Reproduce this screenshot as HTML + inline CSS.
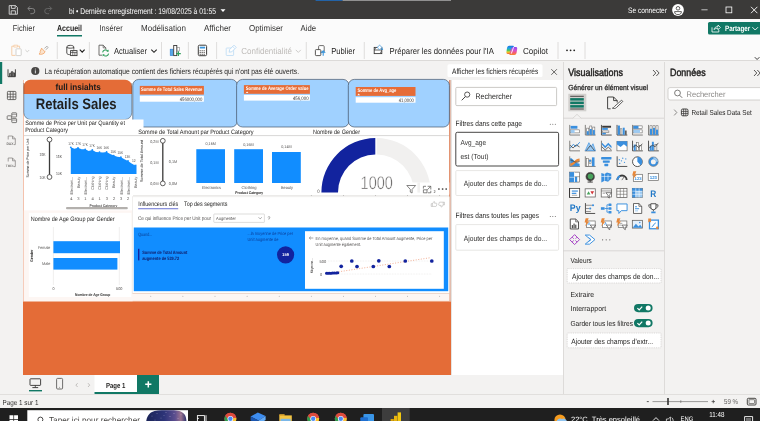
<!DOCTYPE html>
<html lang="fr"><head><meta charset="utf-8"><title>bi - Power BI Desktop</title>
<style>
html,body{margin:0;padding:0;background:#f3f2f1;}
body{width:760px;height:421px;overflow:hidden;position:relative;font-family:"Liberation Sans",sans-serif;}
.r{position:absolute;box-sizing:border-box;}
svg{position:absolute;left:0;top:0;will-change:transform;}
text{font-family:"Liberation Sans",sans-serif;white-space:pre;text-rendering:geometricPrecision;}
</style></head><body>
<div class="r " id="titlebar" style="left:0px;top:0px;width:760px;height:18.6px;background:#3b3a39;"></div>
<div class="r " id="ribbon" style="left:0px;top:18.6px;width:760px;height:42.9px;background:#fbfbfb;border-bottom:1px solid #dcdad8;"></div>
<div class="r " id="rail" style="left:0px;top:62px;width:23px;height:332px;background:#f3f2f1;"></div>
<div class="r " id="notif" style="left:23px;top:62px;width:540px;height:18px;background:#f3f2f1;"></div>
<div class="r " id="canvas" style="left:23px;top:80px;width:428px;height:295px;background:#E46C37;"></div>
<div class="r " id="filters" style="left:451px;top:79.6px;width:112px;height:295.4px;background:#ffffff;border-left:1px solid #e6e4e2;"></div>
<div class="r " id="viz" style="left:563px;top:62px;width:101px;height:332px;background:#f3f2f1;border-left:1px solid #dddbd9;"></div>
<div class="r " id="data" style="left:664px;top:62px;width:96px;height:332px;background:#f3f2f1;border-left:1px solid #dddbd9;"></div>
<div class="r " id="pagetabs" style="left:23px;top:375px;width:540px;height:19px;background:#f3f2f1;"></div>
<div class="r " id="status" style="left:0px;top:394px;width:760px;height:14px;background:#f3f2f1;border-top:1px solid #e1dfdd;"></div>
<div class="r " id="taskbar" style="left:0px;top:408px;width:760px;height:13px;background:#1f1f1f;"></div>
<svg width="760" height="421" viewBox="0 0 760 421">
<rect x="315.6" y="0" width="27.0" height="0.8" fill="#1f6fc4" rx="0" />
<rect x="342.6" y="0" width="108.4" height="0.8" fill="#a8a8a8" rx="0" />
<path d="M9.2 5.6h6.4l1.8 1.8v6.8h-8.2z M11.4 5.6v2.8h3.8v-2.8 M11.2 14.2v-3.4h4.2v3.4" fill="none" stroke="#d8d8d8" stroke-width="0.9" />
<path d="M28 8.5h4.2a2.6 2.6 0 0 1 0 5.2h-1.8 M30 6.3l-2.2 2.2l2.2 2.2" fill="none" stroke="#8a8a8a" stroke-width="0.9" />
<path d="M51.5 8.5h-4.2a2.6 2.6 0 0 0 0 5.2h1.8 M49.5 6.3l2.2 2.2l-2.2 2.2" fill="none" stroke="#6a6a6a" stroke-width="0.9" />
<text x="69" y="14.14" font-size="8.4" fill="#ffffff" font-weight="400" textLength="147" lengthAdjust="spacingAndGlyphs" >bi • Dernière enregistrement : 19/08/2025 à 01:55</text>
<path d="M220.5 9.3h5l-2.5 2.8z" fill="#ffffff" />
<text x="628" y="13.03" font-size="7.8" fill="#ffffff" font-weight="400" textLength="39" lengthAdjust="spacingAndGlyphs" >Se connecter</text>
<circle cx="678" cy="10" r="5.9" fill="#ffffff" />
<circle cx="678" cy="8.3" r="1.8" fill="#ffffff" stroke="#3b3a39" stroke-width="0.8" />
<path d="M674.6 11.6h6.8c0 2.2-1.4 3-3.4 3s-3.4-0.8-3.4-3z" fill="#ffffff" stroke="#3b3a39" stroke-width="0.8" />
<line x1="701.4" y1="9.8" x2="707.6" y2="9.8" stroke="#d0d0d0" stroke-width="0.9" />
<rect x="726" y="7" width="5.8" height="5.8" fill="none" stroke="#ffffff" stroke-width="0.8" rx="0" />
<path d="M751 6.8l6.4 6.4M757.4 6.8l-6.4 6.4" fill="none" stroke="#ffffff" stroke-width="0.9" />
<text x="12.7" y="30.91" font-size="8.6" fill="#323130" font-weight="400" textLength="22.3" lengthAdjust="spacingAndGlyphs" >Fichier</text>
<text x="99.5" y="30.91" font-size="8.6" fill="#323130" font-weight="400" textLength="23.2" lengthAdjust="spacingAndGlyphs" >Insérer</text>
<text x="141" y="30.91" font-size="8.6" fill="#323130" font-weight="400" textLength="45" lengthAdjust="spacingAndGlyphs" >Modélisation</text>
<text x="204" y="30.91" font-size="8.6" fill="#323130" font-weight="400" textLength="27" lengthAdjust="spacingAndGlyphs" >Afficher</text>
<text x="249" y="30.91" font-size="8.6" fill="#323130" font-weight="400" textLength="34" lengthAdjust="spacingAndGlyphs" >Optimiser</text>
<text x="300.5" y="30.91" font-size="8.6" fill="#323130" font-weight="400" textLength="15.5" lengthAdjust="spacingAndGlyphs" >Aide</text>
<text x="57" y="30.91" font-size="8.6" fill="#201f1e" font-weight="700" textLength="25" lengthAdjust="spacingAndGlyphs" >Accueil</text>
<rect x="57" y="35" width="25" height="1.5" fill="#117865" rx="0" />
<rect x="708" y="22" width="57" height="12.6" fill="#117865" rx="1.5" />
<path d="M712 27.3v4.7h6.8v-2 M714 29.6c0.4-2 1.8-3 4-3v-1.6l2.4 2.4l-2.4 2.4v-1.6c-1.6 0-3 0.4-4 1.4z" fill="none" stroke="#ffffff" stroke-width="0.8" />
<text x="725" y="31.23" font-size="7.8" fill="#ffffff" font-weight="700" textLength="25.2" lengthAdjust="spacingAndGlyphs" >Partager</text>
<path d="M752.4 27.2l2.8 2.8l2.8-2.8" fill="none" stroke="#ffffff" stroke-width="0.9" />
<line x1="57.3" y1="42" x2="57.3" y2="59" stroke="#d8d6d4" stroke-width="0.8" />
<line x1="89.4" y1="42" x2="89.4" y2="59" stroke="#d8d6d4" stroke-width="0.8" />
<line x1="161.5" y1="42" x2="161.5" y2="59" stroke="#d8d6d4" stroke-width="0.8" />
<line x1="188.4" y1="42" x2="188.4" y2="59" stroke="#d8d6d4" stroke-width="0.8" />
<line x1="216.6" y1="42" x2="216.6" y2="59" stroke="#d8d6d4" stroke-width="0.8" />
<line x1="306.3" y1="42" x2="306.3" y2="59" stroke="#d8d6d4" stroke-width="0.8" />
<line x1="364.3" y1="42" x2="364.3" y2="59" stroke="#d8d6d4" stroke-width="0.8" />
<line x1="558" y1="42" x2="558" y2="59" stroke="#d8d6d4" stroke-width="0.8" />
<line x1="585" y1="42" x2="585" y2="59" stroke="#d8d6d4" stroke-width="0.8" />
<path d="M15.6 55.4h-3.8v-9.2h7.8v2.2" fill="none" stroke="#f5c9a0" stroke-width="0.9" />
<path d="M13.8 45.2h3.8v1.8h-3.8z" fill="#ffffff" stroke="#f5c9a0" stroke-width="0.8" />
<rect x="16" y="48.8" width="5.2" height="6.8" fill="#ffffff" stroke="#c8c6c4" stroke-width="0.8" rx="0.6" />
<path d="M25.4 50l1.9 1.9l1.9-1.9" fill="none" stroke="#c8c6c4" stroke-width="0.8" />
<path d="M44.4 48.4l2.6-2.2l1.2 1.4l-2.6 2.2" fill="none" stroke="#a19f9d" stroke-width="0.8" />
<path d="M41.6 48.2l3.6 3.8l-1.2 1.2c-1.6 1.2-3.2 1.4-5 0.8c1-0.8 1.4-1.6 1.2-2.6z" fill="#fbe3cc" stroke="#f0a060" stroke-width="0.8" />
<path d="M66.8 47c0-2.2 7-2.2 7 0v2.6 M66.8 47v6c0 1 1.4 1.6 3 1.7 M66.8 47c0 1.6 7 1.6 7 0" fill="none" stroke="#3b3a39" stroke-width="0.9" />
<rect x="70.6" y="50.6" width="6.4" height="5.0" fill="#ffffff" stroke="#3b3a39" stroke-width="0.9" rx="0" />
<line x1="70.6" y1="52.4" x2="77" y2="52.4" stroke="#3b3a39" stroke-width="0.7" />
<line x1="72.8" y1="50.6" x2="72.8" y2="55.6" stroke="#3b3a39" stroke-width="0.7" />
<line x1="74.9" y1="52.4" x2="74.9" y2="55.6" stroke="#3b3a39" stroke-width="0.7" />
<path d="M79.8 49.6l2.4 2.5l2.4-2.5" fill="none" stroke="#252423" stroke-width="1.2" />
<path d="M102 55.2h-3v-10h4.2l2.6 2.6v1.6" fill="none" stroke="#605e5c" stroke-width="0.9" />
<path d="M103.2 45.2v2.6h2.6" fill="none" stroke="#605e5c" stroke-width="0.8" />
<path d="M102.6 52.4a3 3 0 0 1 5.2-1.4 M108.6 53.6a3 3 0 0 1-5.2 1.4" fill="none" stroke="#2e9e5b" stroke-width="1.1" />
<path d="M108.6 49.6v2.2h-2.2z M102.6 56.4v-2.2h2.2z" fill="#2e9e5b" />
<text x="114" y="53.65" font-size="8.7" fill="#252423" font-weight="400" textLength="33" lengthAdjust="spacingAndGlyphs" >Actualiser</text>
<path d="M151.3 49.6l2.7 2.7l2.7-2.7" fill="none" stroke="#252423" stroke-width="1.1" />
<rect x="170.2" y="49.2" width="3.0" height="6.4" fill="#5aa9e8" stroke="#2b7cd3" stroke-width="0.6" rx="0" />
<rect x="173.7" y="45.5" width="3.1" height="10.1" fill="#ffffff" stroke="#3b3a39" stroke-width="0.9" rx="0" />
<rect x="177.2" y="47.4" width="2.4" height="3.6" fill="#ffffff" stroke="#8a8886" stroke-width="0.6" rx="0" />
<path d="M178.4 51.2v4.8M176 53.6h4.8" fill="none" stroke="#2e9e5b" stroke-width="1.1" />
<rect x="198.3" y="45.2" width="8.3" height="10.5" fill="#ffffff" stroke="#3b3a39" stroke-width="1" rx="1.2" />
<rect x="199.8" y="46.7" width="5.3" height="1.8" fill="#3a96dd" rx="0" />
<rect x="199.6" y="50.2" width="1.2" height="1.1" fill="#605e5c" rx="0" />
<rect x="201.6" y="50.2" width="1.2" height="1.1" fill="#605e5c" rx="0" />
<rect x="203.6" y="50.2" width="1.2" height="1.1" fill="#605e5c" rx="0" />
<rect x="199.6" y="52" width="1.2" height="1.1" fill="#605e5c" rx="0" />
<rect x="201.6" y="52" width="1.2" height="1.1" fill="#605e5c" rx="0" />
<rect x="203.6" y="52" width="1.2" height="1.1" fill="#605e5c" rx="0" />
<rect x="199.6" y="53.8" width="1.2" height="1.1" fill="#605e5c" rx="0" />
<rect x="201.6" y="53.8" width="1.2" height="1.1" fill="#605e5c" rx="0" />
<rect x="203.6" y="53.8" width="1.2" height="1.1" fill="#605e5c" rx="0" />
<rect x="226.2" y="48" width="7.4" height="7.5" fill="none" stroke="#c3dff5" stroke-width="0.9" rx="0.6" />
<path d="M229.6 49.6l4.4-4.4l2.2 2.2l-4.4 4.4l-2.6 0.4z" fill="#ffffff" stroke="#b3d6f2" stroke-width="0.8" />
<path d="M232.6 46.4l2.2 2.2" fill="none" stroke="#b3d6f2" stroke-width="0.7" />
<text x="241.3" y="53.65" font-size="8.7" fill="#bebbb8" font-weight="400" textLength="50.7" lengthAdjust="spacingAndGlyphs" >Confidentialité</text>
<path d="M295.8 49.9l2.5 2.5l2.5-2.5" fill="none" stroke="#c8c6c4" stroke-width="0.9" />
<rect x="318.6" y="45.6" width="5.6" height="6.6" fill="#ffffff" stroke="#605e5c" stroke-width="0.9" rx="1" />
<rect x="315.4" y="49.6" width="5.4" height="6.0" fill="#ffffff" stroke="#484644" stroke-width="0.9" rx="0.8" />
<path d="M323.2 55.8v-4.6M321.2 52.8l2-2l2 2" fill="none" stroke="#3a96dd" stroke-width="1.1" />
<text x="331.2" y="53.65" font-size="8.7" fill="#252423" font-weight="400" textLength="23.8" lengthAdjust="spacingAndGlyphs" >Publier</text>
<rect x="374.2" y="47.4" width="7.6" height="6.2" fill="#ffffff" stroke="#3b3a39" stroke-width="0.9" rx="0" />
<line x1="374.2" y1="50" x2="381.8" y2="50" stroke="#3b3a39" stroke-width="0.8" />
<path d="M374.2 47.4l1.4 1.3l-1.4 1.3M381.8 53.6l-1.4-1.3l1.4-1.3" fill="none" stroke="#3b3a39" stroke-width="0.7" />
<path d="M379.6 44.8l1 1.6l1.6 1l-1.6 1l-1 1.6l-1-1.6l-1.6-1l1.6-1z" fill="#ffffff" stroke="#3a96dd" stroke-width="0.6" />
<circle cx="382.2" cy="49.2" r="0.9" fill="#3a96dd" />
<text x="389.5" y="53.65" font-size="8.7" fill="#252423" font-weight="400" textLength="104.3" lengthAdjust="spacingAndGlyphs" >Préparer les données pour l'IA</text>
<defs><linearGradient id="cg1" x1="0" y1="0" x2="0" y2="1"><stop offset="0" stop-color="#1a6fe0"/><stop offset="0.3" stop-color="#1fa3e8"/><stop offset="0.55" stop-color="#3cc46a"/><stop offset="0.78" stop-color="#f3d125"/><stop offset="1" stop-color="#f0602a"/></linearGradient><linearGradient id="cg2" x1="0" y1="0" x2="0" y2="1"><stop offset="0" stop-color="#8a4bf0"/><stop offset="0.4" stop-color="#d34fd6"/><stop offset="0.7" stop-color="#f25a78"/><stop offset="1" stop-color="#f78a2a"/></linearGradient></defs>
<path d="M509.3 45.8h3.4c1 0 1.4 0.6 1.1 1.5l-1.7 5.2c-0.3 0.9-1 1.4-2 1.4h-2.3c-1 0-1.5-0.7-1.4-1.6l0.5-3.6c0.2-1.8 1-2.9 2.4-2.9z" fill="url(#cg1)" />
<path d="M513.9 47.1h1.9c1 0 1.5 0.7 1.4 1.6l-0.5 3.4c-0.2 1.8-1 2.9-2.4 2.9h-3.8c-1 0-1.4-0.6-1.1-1.5l1.9-5.2c0.4-0.8 1-1.2 2.6-1.2z" fill="url(#cg2)" />
<path d="M513.6 47.2l-2.3 6.4" fill="none" stroke="#ffffff" stroke-width="0.9" />
<text x="523" y="53.65" font-size="8.7" fill="#252423" font-weight="400" textLength="25" lengthAdjust="spacingAndGlyphs" >Copilot</text>
<circle cx="567" cy="50.3" r="0.9" fill="#252423" />
<circle cx="570.6" cy="50.3" r="0.9" fill="#252423" />
<circle cx="574.2" cy="50.3" r="0.9" fill="#252423" />
<path d="M754.8 57.2l2.3 2.3l2.3-2.3" fill="none" stroke="#252423" stroke-width="0.9" />
<circle cx="35.3" cy="71" r="4.1" fill="#484644" />
<rect x="34.9" y="70.3" width="0.8" height="3.1" fill="#ffffff" rx="0" />
<rect x="34.9" y="68.6" width="0.8" height="0.9" fill="#ffffff" rx="0" />
<text x="44.5" y="73.86" font-size="7.9" fill="#252423" font-weight="400" textLength="254.5" lengthAdjust="spacingAndGlyphs" >La récupération automatique contient des fichiers récupérés qui n'ont pas été ouverts.</text>
<rect x="447.5" y="64.3" width="95.0" height="12.7" fill="#ffffff" rx="1.5" />
<text x="452" y="73.86" font-size="7.9" fill="#252423" font-weight="400" textLength="86.3" lengthAdjust="spacingAndGlyphs" >Afficher les fichiers récupérés</text>
<path d="M551.3 69.2l5.6 5.6M556.9 69.2l-5.6 5.6" fill="none" stroke="#484644" stroke-width="0.8" />
<rect x="0" y="62" width="2.2" height="22" fill="#117865" rx="0" />
<path d="M8 69.3v7.4h7.4v-7.4 M9.6 76.7v-3.4h1.3v3.4 M11.4 76.7v-5h1.3v5 M13.2 76.7v-3.8h1.3v3.8" fill="none" stroke="#323130" stroke-width="0.9" />
<rect x="7.4" y="91.4" width="8.5" height="8.2" fill="none" stroke="#484644" stroke-width="0.8" rx="0.8" />
<line x1="7.4" y1="94.2" x2="15.9" y2="94.2" stroke="#484644" stroke-width="0.7" />
<line x1="7.4" y1="96.9" x2="15.9" y2="96.9" stroke="#484644" stroke-width="0.7" />
<line x1="10.3" y1="91.4" x2="10.3" y2="99.6" stroke="#484644" stroke-width="0.7" />
<line x1="13.1" y1="91.4" x2="13.1" y2="99.6" stroke="#484644" stroke-width="0.7" />
<rect x="11.8" y="112.8" width="4.8" height="4.2" fill="none" stroke="#605e5c" stroke-width="0.8" rx="0.6" />
<rect x="7.2" y="115.8" width="4.2" height="3.6" fill="none" stroke="#605e5c" stroke-width="0.8" rx="0.6" />
<rect x="11.8" y="118.6" width="4.8" height="4.0" fill="none" stroke="#605e5c" stroke-width="0.8" rx="0.6" />
<line x1="11.8" y1="114.3" x2="16.6" y2="114.3" stroke="#605e5c" stroke-width="0.6" />
<line x1="11.8" y1="120.1" x2="16.6" y2="120.1" stroke="#605e5c" stroke-width="0.6" />
<path d="M8.2 139.5v-3.5h4.3l2.8 2.8v5.8h-1.5 M12.5 136v2.8h2.8" fill="none" stroke="#8a8886" stroke-width="0.8" />
<text x="6.4" y="144.66" font-size="3.6" fill="#797775" font-weight="700" textLength="7.2" lengthAdjust="spacingAndGlyphs" >DAX</text>
<path d="M8.2 161.5v-3.5h4.3l2.8 2.8v5.8h-1.5 M12.5 158v2.8h2.8" fill="none" stroke="#8a8886" stroke-width="0.8" />
<text x="5.8" y="166.59" font-size="3.4" fill="#797775" font-weight="700" textLength="8.6" lengthAdjust="spacingAndGlyphs" >TMDL</text>
<rect x="24" y="80" width="425" height="213" fill="#ffffff" rx="0" />
<rect x="449.5" y="80" width="1.5" height="221" fill="#e2bcad" rx="0" />
<rect x="23" y="80" width="0.8" height="221" fill="#f8d9cb" rx="0" />
<rect x="24" y="293.4" width="425.5" height="7.8" fill="#fdf6f3" rx="0" />
<rect x="23" y="300.9" width="428" height="1.1" fill="#eda27f" rx="0" />
<circle cx="54.5" cy="296.3" r="0.45" fill="#8a8886" />
<circle cx="86.59999999999997" cy="296.3" r="0.45" fill="#8a8886" />
<circle cx="118.69999999999999" cy="296.3" r="0.45" fill="#8a8886" />
<circle cx="150.79999999999998" cy="296.3" r="0.45" fill="#8a8886" />
<circle cx="182.89999999999998" cy="296.3" r="0.45" fill="#8a8886" />
<circle cx="215.0" cy="296.3" r="0.45" fill="#8a8886" />
<circle cx="247.1" cy="296.3" r="0.45" fill="#8a8886" />
<circle cx="279.2" cy="296.3" r="0.45" fill="#8a8886" />
<circle cx="311.3" cy="296.3" r="0.45" fill="#8a8886" />
<circle cx="343.4" cy="296.3" r="0.45" fill="#8a8886" />
<circle cx="375.5" cy="296.3" r="0.45" fill="#8a8886" />
<circle cx="407.6" cy="296.3" r="0.45" fill="#8a8886" />
<circle cx="439.7" cy="296.3" r="0.45" fill="#8a8886" />
<path d="M23.6 94v-7.2a7 7 0 0 1 7-7h94.4a7 7 0 0 1 7 7v7.2z" fill="#E46C37" />
<path d="M23.6 94v18.6a7 7 0 0 0 7 7h94.4a7 7 0 0 0 7-7v-18.6z" fill="#A0D1FF" />
<path d="M23.8 83v29.6a7 7 0 0 0 7 7h94a7 7 0 0 0 7-7v-29.6" fill="none" stroke="#4a4a4a" stroke-width="0.5" />
<text x="55.6" y="89.7" font-size="8.9" fill="#1a1a1a" font-weight="700" textLength="45.2" lengthAdjust="spacingAndGlyphs" >full insiahts</text>
<text x="35.7" y="109.1" font-size="15.2" fill="#201f1e" font-weight="700" textLength="80.9" lengthAdjust="spacingAndGlyphs" >Retails Sales</text>
<rect x="132.8" y="79.4" width="104.5" height="47.6" fill="#A0D1FF" stroke="#46566a" stroke-width="0.7" rx="6" />
<rect x="236.6" y="79.4" width="112.4" height="47.6" fill="#A0D1FF" stroke="#46566a" stroke-width="0.7" rx="6" />
<rect x="348.3" y="79.4" width="101.1" height="47.6" fill="#A0D1FF" stroke="#46566a" stroke-width="0.7" rx="6" />
<rect x="139.8" y="85.9" width="64.1" height="8.7" fill="#E66C37" rx="0" />
<rect x="139.8" y="95.8" width="64.1" height="5.9" fill="#ffffff" rx="0" />
<text x="141" y="91.28" font-size="5.1" fill="#ffffff" font-weight="700" textLength="61.3" lengthAdjust="spacingAndGlyphs" >Somme de Total Sales Revenue</text>
<text x="179.7" y="100.58" font-size="5.1" fill="#3b3a39" font-weight="400" textLength="22.6" lengthAdjust="spacingAndGlyphs" >456000,000</text>
<rect x="243.9" y="85.1" width="66.0" height="8.7" fill="#E66C37" rx="0" />
<rect x="243.9" y="94.9" width="66.0" height="5.7" fill="#ffffff" rx="0" />
<text x="245.8" y="90.19" font-size="5.1" fill="#ffffff" font-weight="700" textLength="62.8" lengthAdjust="spacingAndGlyphs" >Somme de Average Order value</text>
<path d="M245.8 93.1l1.3-1.7l1.3 1.7z" fill="#ffffff" />
<text x="292.9" y="99.69" font-size="5.1" fill="#3b3a39" font-weight="400" textLength="15.7" lengthAdjust="spacingAndGlyphs" >456,000</text>
<rect x="355.7" y="87" width="59.8" height="8.9" fill="#E66C37" rx="0" />
<rect x="355.7" y="97.2" width="59.8" height="5.5" fill="#ffffff" rx="0" />
<text x="357.4" y="92.38" font-size="5.1" fill="#ffffff" font-weight="700" textLength="39.0" lengthAdjust="spacingAndGlyphs" >Somme de Avg_age</text>
<path d="M357.4 95.2l1.3-1.7l1.3 1.7z" fill="#ffffff" />
<text x="398.8" y="101.88" font-size="5.1" fill="#3b3a39" font-weight="400" textLength="15.0" lengthAdjust="spacingAndGlyphs" >41,0000</text>
<rect x="24" y="119.5" width="119.5" height="16.5" fill="#ffffff" rx="0" />
<text x="25.3" y="125.34" font-size="6.3" fill="#252423" font-weight="400" textLength="99.7" lengthAdjust="spacingAndGlyphs" >Somme de Price per Unit par Quantity et</text>
<text x="25.3" y="131.74" font-size="6.3" fill="#252423" font-weight="400" textLength="42.7" lengthAdjust="spacingAndGlyphs" >Product Category</text>
<line x1="24" y1="135.6" x2="449" y2="135.6" stroke="#c8c6c4" stroke-width="0.7" />
<line x1="133" y1="195.6" x2="449" y2="195.6" stroke="#e1dfdd" stroke-width="0.7" />
<text x="0" y="0" font-size="3.9" fill="#252423" font-weight="400" textLength="39" lengthAdjust="spacingAndGlyphs" transform="translate(28.6 177.5) rotate(-90)">Somme de Price per Unit</text>
<line x1="49.5" y1="139.6" x2="49.5" y2="177" stroke="#3b3a39" stroke-width="1.3" />
<circle cx="49.5" cy="139.6" r="2.4" fill="#ffffff" stroke="#3b3a39" stroke-width="0.8" />
<circle cx="49.5" cy="177" r="2.4" fill="#ffffff" stroke="#3b3a39" stroke-width="0.8" />
<text x="39.6" y="155.5" font-size="4.29" fill="#535150" font-weight="400" textLength="6.0" lengthAdjust="spacingAndGlyphs" >15K</text>
<text x="39.6" y="179.0" font-size="4.29" fill="#535150" font-weight="400" textLength="6.0" lengthAdjust="spacingAndGlyphs" >10K</text>
<text x="56" y="157.7" font-size="4.29" fill="#535150" font-weight="400" textLength="6" lengthAdjust="spacingAndGlyphs" >15K</text>
<text x="56" y="174.8" font-size="4.29" fill="#535150" font-weight="400" textLength="6" lengthAdjust="spacingAndGlyphs" >10K</text>
<path d="M70.8 147.3 L74.4 148.8 L78 147.8 L81.6 149.2 L85.2 149.3 L88.7 151 L92.3 150 L95.9 152 L99.5 152.2 L103 152.6 L106.6 152 L110.2 154 L113.7 155.6 L117.3 156.8 L120.9 157.2 L124.4 159.2 L128 161 L131.6 163.6 L135.1 165.4 L136.5 164.6 L136.5 173.9 L70.8 173.9 Z" fill="#118DFF" />
<circle cx="70.8" cy="147.3" r="0.9" fill="#118DFF" />
<circle cx="78" cy="147.8" r="0.9" fill="#118DFF" />
<circle cx="85.2" cy="149.3" r="0.9" fill="#118DFF" />
<circle cx="92.3" cy="150" r="0.9" fill="#118DFF" />
<circle cx="99.5" cy="152.2" r="0.9" fill="#118DFF" />
<circle cx="106.6" cy="152" r="0.9" fill="#118DFF" />
<circle cx="113.7" cy="155.6" r="0.9" fill="#118DFF" />
<circle cx="120.9" cy="157.2" r="0.9" fill="#118DFF" />
<circle cx="128" cy="161" r="0.9" fill="#118DFF" />
<circle cx="135.1" cy="165.4" r="0.9" fill="#118DFF" />
<text x="68.3" y="144.88" font-size="3.95" fill="#535150" font-weight="400" textLength="5.6" lengthAdjust="spacingAndGlyphs" >17K</text>
<text x="75.4" y="144.98" font-size="3.95" fill="#535150" font-weight="400" textLength="5.6" lengthAdjust="spacingAndGlyphs" >17K</text>
<text x="82.3" y="145.98" font-size="3.95" fill="#535150" font-weight="400" textLength="5.6" lengthAdjust="spacingAndGlyphs" >17K</text>
<text x="89.3" y="146.88" font-size="3.95" fill="#535150" font-weight="400" textLength="5.6" lengthAdjust="spacingAndGlyphs" >17K</text>
<text x="96.4" y="148.58" font-size="3.95" fill="#535150" font-weight="400" textLength="5.6" lengthAdjust="spacingAndGlyphs" >16K</text>
<text x="103.5" y="148.68" font-size="3.95" fill="#535150" font-weight="400" textLength="5.6" lengthAdjust="spacingAndGlyphs" >16K</text>
<text x="110.6" y="152.78" font-size="3.95" fill="#535150" font-weight="400" textLength="5.6" lengthAdjust="spacingAndGlyphs" >15K</text>
<text x="117.6" y="153.78" font-size="3.95" fill="#535150" font-weight="400" textLength="5.6" lengthAdjust="spacingAndGlyphs" >15K</text>
<text x="124.8" y="158.38" font-size="3.95" fill="#535150" font-weight="400" textLength="5.6" lengthAdjust="spacingAndGlyphs" >13K</text>
<text x="132" y="162.18" font-size="3.95" fill="#535150" font-weight="400" textLength="3.7" lengthAdjust="spacingAndGlyphs" >12</text>
<text x="-18" y="0" font-size="4" fill="#535150" font-weight="400" textLength="18" lengthAdjust="spacingAndGlyphs" transform="translate(72.60000000000001 176.6) rotate(-90)">Electroni...</text>
<text x="-11.2" y="0" font-size="4" fill="#535150" font-weight="400" textLength="11.2" lengthAdjust="spacingAndGlyphs" transform="translate(79.7 176.6) rotate(-90)">Beauty</text>
<text x="-18" y="0" font-size="4" fill="#535150" font-weight="400" textLength="18" lengthAdjust="spacingAndGlyphs" transform="translate(86.7 176.6) rotate(-90)">Electroni...</text>
<text x="-13.2" y="0" font-size="4" fill="#535150" font-weight="400" textLength="13.2" lengthAdjust="spacingAndGlyphs" transform="translate(93.9 176.6) rotate(-90)">Clothing</text>
<text x="-13.2" y="0" font-size="4" fill="#535150" font-weight="400" textLength="13.2" lengthAdjust="spacingAndGlyphs" transform="translate(101.0 176.6) rotate(-90)">Clothing</text>
<text x="-13.2" y="0" font-size="4" fill="#535150" font-weight="400" textLength="13.2" lengthAdjust="spacingAndGlyphs" transform="translate(108.2 176.6) rotate(-90)">Clothing</text>
<text x="-11.2" y="0" font-size="4" fill="#535150" font-weight="400" textLength="11.2" lengthAdjust="spacingAndGlyphs" transform="translate(115.30000000000001 176.6) rotate(-90)">Beauty</text>
<text x="-18" y="0" font-size="4" fill="#535150" font-weight="400" textLength="18" lengthAdjust="spacingAndGlyphs" transform="translate(122.5 176.6) rotate(-90)">Electroni...</text>
<text x="-18" y="0" font-size="4" fill="#535150" font-weight="400" textLength="18" lengthAdjust="spacingAndGlyphs" transform="translate(129.5 176.6) rotate(-90)">Electroni...</text>
<text x="-11.2" y="0" font-size="4" fill="#535150" font-weight="400" textLength="11.2" lengthAdjust="spacingAndGlyphs" transform="translate(136.5 176.6) rotate(-90)">Beauty</text>
<text x="70.2" y="199.62" font-size="4.07" fill="#535150" font-weight="400" >4</text>
<text x="77.3" y="199.62" font-size="4.07" fill="#535150" font-weight="400" >3</text>
<text x="84.3" y="199.62" font-size="4.07" fill="#535150" font-weight="400" >1</text>
<text x="91.5" y="199.62" font-size="4.07" fill="#535150" font-weight="400" >4</text>
<text x="98.6" y="199.62" font-size="4.07" fill="#535150" font-weight="400" >1</text>
<text x="105.8" y="199.62" font-size="4.07" fill="#535150" font-weight="400" >3</text>
<text x="112.9" y="199.62" font-size="4.07" fill="#535150" font-weight="400" >2</text>
<text x="120.1" y="199.62" font-size="4.07" fill="#535150" font-weight="400" >3</text>
<text x="127.1" y="199.62" font-size="4.07" fill="#535150" font-weight="400" >2</text>
<text x="89.5" y="206.58" font-size="3.95" fill="#535150" font-weight="700" textLength="27.8" lengthAdjust="spacingAndGlyphs" >Product Category</text>
<rect x="66" y="207" width="61.8" height="2.2" fill="#b3b0ad" rx="1" />
<text x="138.3" y="133.84" font-size="6.3" fill="#252423" font-weight="400" textLength="115.3" lengthAdjust="spacingAndGlyphs" >Somme de Total Amount par Product Category</text>
<text x="0" y="0" font-size="3.9" fill="#252423" font-weight="400" textLength="42" lengthAdjust="spacingAndGlyphs" transform="translate(142.6 182) rotate(-90)">Somme de Total Amount</text>
<line x1="162.8" y1="140.8" x2="162.8" y2="183.4" stroke="#3b3a39" stroke-width="1.3" />
<circle cx="162.8" cy="140.8" r="2.4" fill="#ffffff" stroke="#3b3a39" stroke-width="0.8" />
<circle cx="162.8" cy="183.4" r="2.4" fill="#ffffff" stroke="#3b3a39" stroke-width="0.8" />
<text x="150.3" y="142.76" font-size="4.18" fill="#535150" font-weight="400" textLength="8.2" lengthAdjust="spacingAndGlyphs" >0,2M</text>
<text x="150.3" y="163.66" font-size="4.18" fill="#535150" font-weight="400" textLength="8.2" lengthAdjust="spacingAndGlyphs" >0,1M</text>
<text x="150.3" y="184.96" font-size="4.18" fill="#535150" font-weight="400" textLength="8.2" lengthAdjust="spacingAndGlyphs" >0,0M</text>
<text x="168.8" y="162.86" font-size="4.18" fill="#535150" font-weight="400" textLength="8.4" lengthAdjust="spacingAndGlyphs" >0,1M</text>
<text x="168.8" y="184.96" font-size="4.18" fill="#535150" font-weight="400" textLength="8.4" lengthAdjust="spacingAndGlyphs" >0,0M</text>
<rect x="196.3" y="149.2" width="28.7" height="33.8" fill="#118DFF" rx="0" />
<rect x="234.2" y="149.2" width="28.8" height="33.8" fill="#118DFF" rx="0" />
<rect x="272" y="152" width="28.8" height="31" fill="#118DFF" rx="0" />
<text x="205.5" y="145.42" font-size="4.07" fill="#535150" font-weight="400" textLength="10.3" lengthAdjust="spacingAndGlyphs" >0,16M</text>
<text x="243.2" y="146.02" font-size="4.07" fill="#535150" font-weight="400" textLength="10.6" lengthAdjust="spacingAndGlyphs" >0,16M</text>
<text x="281.2" y="148.02" font-size="4.07" fill="#535150" font-weight="400" textLength="10.4" lengthAdjust="spacingAndGlyphs" >0,14M</text>
<text x="202" y="188.82" font-size="4.07" fill="#535150" font-weight="400" textLength="19" lengthAdjust="spacingAndGlyphs" >Electronics</text>
<text x="241.5" y="188.82" font-size="4.07" fill="#535150" font-weight="400" textLength="15.0" lengthAdjust="spacingAndGlyphs" >Clothing</text>
<text x="281" y="188.82" font-size="4.07" fill="#535150" font-weight="400" textLength="12" lengthAdjust="spacingAndGlyphs" >Beauty</text>
<text x="235.2" y="193.94" font-size="3.84" fill="#252423" font-weight="700" textLength="28.0" lengthAdjust="spacingAndGlyphs" >Product Category</text>
<text x="313" y="133.84" font-size="6.3" fill="#252423" font-weight="400" textLength="47" lengthAdjust="spacingAndGlyphs" >Nombre de Gender</text>
<path d="M321.4 192.5a54.6 54.6 0 0 1 53.9-54.6v16.6a38 38 0 0 0-37.3 38z" fill="#12239E" />
<path d="M376.7 137.9a54.6 54.6 0 0 1 53.9 54.6h-16.6a38 38 0 0 0-37.3-38z" fill="#f1f0ef" />
<text x="360.6" y="189.1" font-size="18.3" fill="#535150" font-weight="400" textLength="32.3" lengthAdjust="spacingAndGlyphs" stroke="#ffffff" stroke-width="0.55">1000</text>
<text x="317.3" y="192.54" font-size="4.97" fill="#535150" font-weight="400" textLength="2.4" lengthAdjust="spacingAndGlyphs" >0</text>
<rect x="404.5" y="182.5" width="44.8" height="12.1" fill="#ffffff" rx="0" />
<rect x="417.4" y="182.5" width="2.6" height="10.1" fill="#f1f0ef" rx="0" />
<path d="M406.8 185.5h8.8l-3.5 3.9v3.6l-1.8-0.9v-2.7z" fill="none" stroke="#535150" stroke-width="0.7" />
<path d="M423.4 188.6v-2.3h2.6 M427.6 186.3h3.2v3.2 M430.8 186.3l-3.6 3.6 M430.8 190.8v2h-3 M423.4 189.8h3.6v3h-3.6z" fill="none" stroke="#535150" stroke-width="0.7" />
<text x="433.5" y="192.63" font-size="3.8" fill="#535150" font-weight="400" >2</text>
<rect x="438.15" y="188.3" width="1.5" height="1.5" fill="#484644" rx="0" />
<rect x="441.85" y="188.3" width="1.5" height="1.5" fill="#484644" rx="0" />
<rect x="445.45" y="188.3" width="1.5" height="1.5" fill="#484644" rx="0" />
<circle cx="311.3" cy="195.4" r="0.45" fill="#8a8886" />
<circle cx="343.4" cy="195.4" r="0.45" fill="#8a8886" />
<circle cx="375.5" cy="195.4" r="0.45" fill="#8a8886" />
<circle cx="407.6" cy="195.4" r="0.45" fill="#8a8886" />
<circle cx="439.7" cy="195.4" r="0.45" fill="#8a8886" />
<rect x="23.8" y="210.4" width="108.8" height="90.8" fill="#fdf6f3" rx="0" />
<rect x="28.8" y="212.8" width="102.5" height="84.2" fill="#ffffff" rx="0" />
<text x="30.8" y="220.74" font-size="6.3" fill="#252423" font-weight="400" textLength="83.8" lengthAdjust="spacingAndGlyphs" >Nombre de Age Group par Gender</text>
<line x1="53.4" y1="227" x2="53.4" y2="285" stroke="#e6e4e2" stroke-width="0.6" />
<line x1="119.3" y1="227" x2="119.3" y2="285" stroke="#e6e4e2" stroke-width="0.6" />
<rect x="53.4" y="241.2" width="66.6" height="12.0" fill="#118DFF" rx="0" />
<rect x="53.4" y="258" width="64.0" height="11.6" fill="#118DFF" rx="0" />
<text x="38" y="248.76" font-size="4.18" fill="#535150" font-weight="400" textLength="12.3" lengthAdjust="spacingAndGlyphs" >Female</text>
<text x="42" y="265.46" font-size="4.18" fill="#535150" font-weight="400" textLength="8.3" lengthAdjust="spacingAndGlyphs" >Male</text>
<text x="0" y="0" font-size="3.95" fill="#252423" font-weight="700" textLength="12.5" lengthAdjust="spacingAndGlyphs" transform="translate(33.3 262) rotate(-90)">Gender</text>
<text x="52.6" y="290.26" font-size="4.18" fill="#535150" font-weight="400" textLength="2.0" lengthAdjust="spacingAndGlyphs" >0</text>
<text x="116" y="290.26" font-size="4.18" fill="#535150" font-weight="400" textLength="6.4" lengthAdjust="spacingAndGlyphs" >500</text>
<text x="75" y="296.18" font-size="3.95" fill="#252423" font-weight="700" textLength="35.3" lengthAdjust="spacingAndGlyphs" >Nombre de Age Group</text>
<rect x="132.6" y="196.8" width="316.7" height="96.4" fill="#ffffff" stroke="#e6e4e2" stroke-width="0.6" rx="0" />
<text x="138.2" y="206.44" font-size="6.4" fill="#252423" font-weight="400" textLength="40.0" lengthAdjust="spacingAndGlyphs" >Influenceurs clés</text>
<rect x="138.2" y="208" width="40.0" height="1.3" fill="#8b93dd" rx="0" />
<text x="184" y="206.44" font-size="6.4" fill="#252423" font-weight="400" textLength="43.4" lengthAdjust="spacingAndGlyphs" >Top des segments</text>
<g transform="translate(-1.6 -0.6) translate(435 204) scale(0.92) translate(-435 -204)">
<path d="M432.6 204.3h1.3v3h-1.3z M433.9 204.5l1.7-2.6c0.8 0 0.9 0.8 0.6 1.9h2c0.6 0 0.7 0.5 0.6 0.9l-0.6 2.2c-0.1 0.3-0.3 0.4-0.6 0.4h-3.7" fill="none" stroke="#a19f9d" stroke-width="0.5" />
</g>
<g transform="translate(-1.7 0.3) translate(443 204) scale(0.92) translate(-443 -204)">
<path d="M446.4 204.7h-1.3v-3h1.3z M445.1 204.5l-1.7 2.6c-0.8 0-0.9-0.8-0.6-1.9h-2c-0.6 0-0.7-0.5-0.6-0.9l0.6-2.2c0.1-0.3 0.3-0.4 0.6-0.4h3.7" fill="none" stroke="#a19f9d" stroke-width="0.5" />
</g>
<text x="138" y="220.12" font-size="5.2" fill="#535150" font-weight="400" textLength="73" lengthAdjust="spacingAndGlyphs" >Ce qui influence Price per Unit pour</text>
<rect x="213.8" y="214" width="50.6" height="8.4" fill="#ffffff" stroke="#c8c6c4" stroke-width="0.6" rx="0.5" />
<text x="216" y="219.98" font-size="4.52" fill="#535150" font-weight="400" textLength="19.8" lengthAdjust="spacingAndGlyphs" >Augmenter</text>
<path d="M258.6 217.3l1.6 1.6l1.6-1.6" fill="none" stroke="#535150" stroke-width="0.5" />
<text x="267.6" y="220.22" font-size="5.2" fill="#535150" font-weight="400" >?</text>
<rect x="133.8" y="227.5" width="314.4" height="63.7" fill="#118DFF" rx="0" />
<text x="138.2" y="235.66" font-size="4.75" fill="#0a3d91" font-weight="400" textLength="14.1" lengthAdjust="spacingAndGlyphs" >Quand...</text>
<text x="247.5" y="235.08" font-size="4.52" fill="#0b3f9a" font-weight="400" textLength="45.5" lengthAdjust="spacingAndGlyphs" >...la moyenne de Price per</text>
<text x="247.5" y="240.88" font-size="4.52" fill="#0b3f9a" font-weight="400" textLength="31.0" lengthAdjust="spacingAndGlyphs" >Unit augmente de</text>
<rect x="138" y="248.8" width="1.4" height="11.6" fill="#12239E" rx="0" />
<text x="142.2" y="253.92" font-size="4.63" fill="#10206e" font-weight="700" textLength="45.1" lengthAdjust="spacingAndGlyphs" >Somme de Total Amount</text>
<text x="142.2" y="259.62" font-size="4.63" fill="#10206e" font-weight="700" textLength="37.0" lengthAdjust="spacingAndGlyphs" >augmente de 539.72</text>
<circle cx="285.6" cy="254.8" r="8.6" fill="#12239E" />
<text x="282.3" y="256.46" font-size="4.18" fill="#ffffff" font-weight="700" textLength="6.7" lengthAdjust="spacingAndGlyphs" >159</text>
<rect x="305" y="231.2" width="138.8" height="57.6" fill="#ffffff" rx="0" />
<path d="M309.3 238h4M309.3 238l1.5-1.4M309.3 238l1.5 1.4" fill="none" stroke="#535150" stroke-width="0.5" />
<text x="315.6" y="240.28" font-size="4.52" fill="#535150" font-weight="400" textLength="116.7" lengthAdjust="spacingAndGlyphs" >En moyenne, quand Somme de Total Amount augmente, Price per</text>
<text x="315.6" y="246.18" font-size="4.52" fill="#535150" font-weight="400" textLength="45.4" lengthAdjust="spacingAndGlyphs" >Unit augmente également.</text>
<text x="0" y="0" font-size="3.84" fill="#252423" font-weight="400" textLength="14.5" lengthAdjust="spacingAndGlyphs" transform="translate(312.5 273) rotate(-90)">Moyenne...</text>
<text x="319.6" y="262.66" font-size="4.18" fill="#535150" font-weight="400" textLength="6.7" lengthAdjust="spacingAndGlyphs" >500</text>
<text x="319.9" y="275.66" font-size="4.18" fill="#535150" font-weight="400" textLength="2.2" lengthAdjust="spacingAndGlyphs" >0</text>
<line x1="328" y1="261" x2="432" y2="261" stroke="#e1dfdd" stroke-width="0.5" stroke-dasharray="0.8 0.8"/>
<line x1="328" y1="274" x2="432" y2="274" stroke="#e1dfdd" stroke-width="0.5" stroke-dasharray="0.8 0.8"/>
<line x1="336" y1="272.2" x2="431" y2="257.6" stroke="#F09A7A" stroke-width="0.8" stroke-dasharray="1 1.6"/>
<circle cx="326.5" cy="273.3" r="1.5" fill="#12239E" />
<circle cx="328" cy="273.3" r="1.5" fill="#12239E" />
<circle cx="329.6" cy="273.2" r="1.5" fill="#12239E" />
<circle cx="331.2" cy="273.2" r="1.5" fill="#12239E" />
<circle cx="332.8" cy="273.1" r="1.5" fill="#12239E" />
<circle cx="334.5" cy="273" r="1.5" fill="#12239E" />
<circle cx="336.3" cy="272.9" r="1.5" fill="#12239E" />
<circle cx="337.8" cy="272.8" r="1.5" fill="#12239E" />
<circle cx="341.2" cy="266.3" r="1.85" fill="#12239E" />
<circle cx="351.8" cy="261" r="1.85" fill="#12239E" />
<circle cx="357" cy="266.5" r="1.85" fill="#12239E" />
<circle cx="373.3" cy="266.5" r="1.85" fill="#12239E" />
<circle cx="378.8" cy="260.8" r="1.85" fill="#12239E" />
<circle cx="389.3" cy="266.5" r="1.85" fill="#12239E" />
<circle cx="405.3" cy="261" r="1.85" fill="#12239E" />
<circle cx="431.8" cy="261" r="1.85" fill="#12239E" />
<rect x="455.8" y="87.4" width="100.8" height="18.2" fill="#ffffff" stroke="#bebbb8" stroke-width="0.8" rx="1" />
<circle cx="467.2" cy="94.6" r="2.6" fill="none" stroke="#323130" stroke-width="0.8" />
<line x1="465.3" y1="96.7" x2="461.7" y2="100.3" stroke="#323130" stroke-width="0.9" />
<text x="475.5" y="99.3" font-size="8" fill="#252423" font-weight="400" textLength="36.5" lengthAdjust="spacingAndGlyphs" >Rechercher</text>
<text x="455.6" y="125.66" font-size="7.6" fill="#252423" font-weight="400" textLength="66.4" lengthAdjust="spacingAndGlyphs" >Filtres dans cette page</text>
<circle cx="550.3" cy="124.3" r="0.5" fill="#605e5c" />
<circle cx="552.8" cy="124.3" r="0.5" fill="#605e5c" />
<circle cx="555.3" cy="124.3" r="0.5" fill="#605e5c" />
<rect x="455.8" y="132.3" width="102.8" height="33.7" fill="#ffffff" stroke="#323130" stroke-width="0.9" rx="1.5" />
<text x="460.5" y="144.66" font-size="7.3" fill="#323130" font-weight="400" textLength="25.5" lengthAdjust="spacingAndGlyphs" >Avg_age</text>
<text x="460.5" y="159.06" font-size="7.3" fill="#323130" font-weight="400" textLength="28.0" lengthAdjust="spacingAndGlyphs" >est (Tout)</text>
<rect x="455.8" y="170.6" width="102.8" height="24.9" fill="#ffffff" stroke="#e1dfdd" stroke-width="0.8" rx="1" />
<text x="463.8" y="185.76" font-size="7.6" fill="#323130" font-weight="400" textLength="83.2" lengthAdjust="spacingAndGlyphs" >Ajouter des champs de do...</text>
<text x="455.6" y="218.16" font-size="7.6" fill="#252423" font-weight="400" textLength="83.4" lengthAdjust="spacingAndGlyphs" >Filtres dans toutes les pages</text>
<circle cx="550.3" cy="216.6" r="0.5" fill="#605e5c" />
<circle cx="552.8" cy="216.6" r="0.5" fill="#605e5c" />
<circle cx="555.3" cy="216.6" r="0.5" fill="#605e5c" />
<rect x="455.8" y="224.6" width="102.8" height="25.6" fill="#ffffff" stroke="#e1dfdd" stroke-width="0.8" rx="1" />
<text x="463.8" y="240.56" font-size="7.6" fill="#323130" font-weight="400" textLength="83.2" lengthAdjust="spacingAndGlyphs" >Ajouter des champs de do...</text>
<text x="568.3" y="76.43" font-size="10.4" fill="#252423" font-weight="400" textLength="54.7" lengthAdjust="spacingAndGlyphs" stroke="#252423" stroke-width="0.45">Visualisations</text>
<path d="M653 70l2.8 3l-2.8 3M656.3 70l2.8 3l-2.8 3" fill="none" stroke="#323130" stroke-width="0.8" />
<text x="568.2" y="90.06" font-size="7.3" fill="#252423" font-weight="400" textLength="79.8" lengthAdjust="spacingAndGlyphs" stroke="#252423" stroke-width="0.25">Générer un élément visuel</text>
<rect x="568.3" y="93.8" width="18.0" height="17.5" fill="#d2d0ce" rx="0" />
<line x1="570.2" y1="96.3" x2="583.8" y2="96.3" stroke="#3b3a39" stroke-width="0.9" />
<line x1="570.2" y1="109" x2="583.8" y2="109" stroke="#3b3a39" stroke-width="0.9" />
<rect x="570.2" y="98.1" width="13.6" height="2.5" fill="#117865" rx="0" />
<rect x="570.2" y="101.6" width="13.6" height="2.5" fill="#117865" rx="0" />
<rect x="570.2" y="105.1" width="13.6" height="2.5" fill="#117865" rx="0" />
<path d="M607.6 108.8v-11.8h6l3.6 3.6v2 M613.6 97v3.6h3.6 M607.6 108.8h3" fill="none" stroke="#323130" stroke-width="0.9" />
<path d="M621.6 100.2l-6.6 5.8c-0.8 0.8-1 1.6-2.6 2.2c1.8 0.6 3.2 0.2 4-0.6l6.4-6.2z" fill="#ffffff" stroke="#323130" stroke-width="0.8" />
<line x1="563" y1="118.2" x2="664" y2="118.2" stroke="#d2d0ce" stroke-width="0.8" />
<path d="M572.7 118.4l4.3-4.1l4.3 4.1" fill="#f3f2f1" stroke="#d2d0ce" stroke-width="0.8" />
<line x1="563" y1="250.8" x2="664" y2="250.8" stroke="#d2d0ce" stroke-width="0.8" />
<g transform="translate(574.6 130.3) scale(1.08) translate(-5 -5)">
<path d="M0.5 0v9.4h9.5" fill="none" stroke="#605e5c" stroke-width="0.7" />
<rect x="1.3" y="0.9" width="6.3" height="2.6" fill="#3a8fde" rx="0" />
<rect x="1.3" y="4.6" width="8.1" height="2.8" fill="#ffffff" stroke="#605e5c" stroke-width="0.5" rx="0" />
<rect x="1.3" y="4.6" width="3.7" height="2.8" fill="#9ccaf2" rx="0" />
</g>
<g transform="translate(590.2 130.3) scale(1.08) translate(-5 -5)">
<path d="M0.5 0v9.4h9.5" fill="none" stroke="#605e5c" stroke-width="0.7" />
<rect x="1.8" y="3" width="1.9" height="6.2" fill="#ffffff" stroke="#605e5c" stroke-width="0.5" rx="0" />
<rect x="1.8" y="5.8" width="1.9" height="3.4" fill="#3a8fde" rx="0" />
<rect x="4.6" y="1" width="1.9" height="8.2" fill="#ffffff" stroke="#605e5c" stroke-width="0.5" rx="0" />
<rect x="4.6" y="3.8" width="1.9" height="5.4" fill="#3a8fde" rx="0" />
<rect x="7.4" y="2" width="1.9" height="7.2" fill="#ffffff" stroke="#605e5c" stroke-width="0.5" rx="0" />
<rect x="7.4" y="4.8" width="1.9" height="4.4" fill="#3a8fde" rx="0" />
</g>
<g transform="translate(606.3 130.3) scale(1.08) translate(-5 -5)">
<path d="M0.5 0v9.4h9.5" fill="none" stroke="#3b3a39" stroke-width="0.8" />
<rect x="1.2" y="0.8" width="8.2" height="1.8" fill="#3b3a39" rx="0" />
<rect x="1.2" y="2.9" width="5.2" height="1.7" fill="#3a8fde" rx="0" />
<rect x="1.2" y="5.6" width="6.2" height="1.6" fill="#ffffff" stroke="#605e5c" stroke-width="0.5" rx="0" />
<rect x="1.2" y="7.4" width="3.4" height="1.4" fill="#3a8fde" rx="0" />
</g>
<g transform="translate(621.9 130.3) scale(1.08) translate(-5 -5)">
<path d="M0.5 0v9.4h9.5" fill="none" stroke="#3b3a39" stroke-width="0.8" />
<rect x="1.2" y="0.6" width="2.0" height="8.6" fill="#3a8fde" rx="0" />
<rect x="3.4" y="3.6" width="1.6" height="5.6" fill="#ffffff" stroke="#605e5c" stroke-width="0.5" rx="0" />
<rect x="5.8" y="2.6" width="1.8" height="6.6" fill="#3a8fde" rx="0" />
<rect x="7.8" y="5.2" width="1.6" height="4.0" fill="#605e5c" rx="0" />
</g>
<g transform="translate(637.4 130.3) scale(1.08) translate(-5 -5)">
<path d="M0.5 0v9.4h9.5" fill="none" stroke="#605e5c" stroke-width="0.7" />
<rect x="1.3" y="0.9" width="8.1" height="2.6" fill="#ffffff" stroke="#605e5c" stroke-width="0.5" rx="0" />
<rect x="1.3" y="0.9" width="4.7" height="2.6" fill="#3a8fde" rx="0" />
<rect x="1.3" y="4.6" width="8.1" height="2.8" fill="#ffffff" stroke="#605e5c" stroke-width="0.5" rx="0" />
<rect x="1.3" y="4.6" width="6.1" height="2.8" fill="#9ccaf2" rx="0" />
</g>
<g transform="translate(653.4 130.3) scale(1.08) translate(-5 -5)">
<path d="M0.5 0v9.4h9.5" fill="none" stroke="#605e5c" stroke-width="0.7" />
<rect x="1.8" y="0.8" width="1.9" height="8.4" fill="#ffffff" stroke="#605e5c" stroke-width="0.5" rx="0" />
<rect x="1.8" y="3.6" width="1.9" height="5.6" fill="#3a8fde" rx="0" />
<rect x="4.6" y="0.8" width="1.9" height="8.4" fill="#ffffff" stroke="#605e5c" stroke-width="0.5" rx="0" />
<rect x="4.6" y="2.8" width="1.9" height="6.4" fill="#3a8fde" rx="0" />
<rect x="7.4" y="0.8" width="1.9" height="8.4" fill="#ffffff" stroke="#605e5c" stroke-width="0.5" rx="0" />
<rect x="7.4" y="4.4" width="1.9" height="4.8" fill="#3a8fde" rx="0" />
</g>
<g transform="translate(574.6 146.1) scale(1.08) translate(-5 -5)">
<path d="M0.5 0v9.4h9.5" fill="none" stroke="#605e5c" stroke-width="0.7" />
<path d="M0.8 7l3-3.6l2.4 2l3.6-4" fill="none" stroke="#3a8fde" stroke-width="0.9" />
<path d="M0.8 4.2l2.8 2.6l2.8-3l3.2 2" fill="none" stroke="#3b3a39" stroke-width="0.7" />
</g>
<g transform="translate(590.2 146.1) scale(1.08) translate(-5 -5)">
<path d="M0 9.4h10" fill="none" stroke="#605e5c" stroke-width="0.7" />
<path d="M0.4 9.2l3.4-7.4l2 3.6l1.8-2.6l2.2 6.4z" fill="#9ccaf2" stroke="#3a8fde" stroke-width="0.6" />
<path d="M1.4 9.2l3.8-4.8l3.8 4.8" fill="none" stroke="#3b3a39" stroke-width="0.7" />
</g>
<g transform="translate(606.3 146.1) scale(1.08) translate(-5 -5)">
<path d="M0.5 0v9.4h9.5" fill="none" stroke="#605e5c" stroke-width="0.7" />
<path d="M0.8 1.6l3.2 3.4l2.8-3l3 3v2l-3-3l-2.8 3l-3.2-3.4z" fill="#3a8fde" />
<path d="M0.8 5.6l3.2 3l2.8-2.6l3 2.6" fill="none" stroke="#3b3a39" stroke-width="0.7" />
</g>
<g transform="translate(621.9 146.1) scale(1.08) translate(-5 -5)">
<rect x="0.4" y="0.6" width="9.4" height="8.8" fill="#ffffff" stroke="#605e5c" stroke-width="0.6" rx="0" />
<path d="M0.4 0.6h9.4v5l-3-2.4l-3 2.6l-3.4-2.2z" fill="#3a8fde" />
</g>
<g transform="translate(637.4 146.1) scale(1.08) translate(-5 -5)">
<path d="M0.5 0v9.4h9.5" fill="none" stroke="#3b3a39" stroke-width="0.8" />
<rect x="1.6" y="3.6" width="1.8" height="5.6" fill="#3a8fde" rx="0" />
<rect x="4.2" y="1.6" width="1.8" height="7.6" fill="#ffffff" stroke="#605e5c" stroke-width="0.5" rx="0" />
<rect x="6.8" y="4.4" width="1.8" height="4.8" fill="#ffffff" stroke="#605e5c" stroke-width="0.5" rx="0" />
<path d="M1 6l2.6-2l2.6 2.4l3.4-3.6" fill="none" stroke="#3b3a39" stroke-width="0.7" />
</g>
<g transform="translate(653.4 146.1) scale(1.08) translate(-5 -5)">
<path d="M0.5 0v9.4h9.5" fill="none" stroke="#3b3a39" stroke-width="0.8" />
<rect x="1.6" y="4.6" width="1.8" height="4.6" fill="#3a8fde" rx="0" />
<rect x="3.6" y="1" width="1.8" height="8.2" fill="#3a8fde" rx="0" />
<rect x="6.4" y="3.6" width="1.8" height="5.6" fill="#ffffff" stroke="#605e5c" stroke-width="0.5" rx="0" />
<path d="M1 7l3-3l2.6 1.6l3-3.6" fill="none" stroke="#3b3a39" stroke-width="0.7" />
</g>
<g transform="translate(574.6 161.7) scale(1.08) translate(-5 -5)">
<path d="M0.5 0v9.4h9.5" fill="none" stroke="#605e5c" stroke-width="0.7" />
<path d="M1 1.6c3 0 3.4 5.2 8.6 5.2v2.4h-8.6z" fill="#3a8fde" />
<path d="M1 6.4c3.4 0 4.4-4.4 8.6-4.4v2.6c-4 0-5 4.4-8.6 4.4z" fill="#e8883a" />
<path d="M1 3.4c3 0.4 5 3.6 8.6 1.2" fill="none" stroke="#3b3a39" stroke-width="0.7" />
</g>
<g transform="translate(590.2 161.7) scale(1.08) translate(-5 -5)">
<path d="M0.5 0v9.4h9.5" fill="none" stroke="#605e5c" stroke-width="0.7" />
<rect x="1.4" y="2" width="2.0" height="7.2" fill="#ffffff" stroke="#605e5c" stroke-width="0.5" rx="0" />
<rect x="4" y="3.4" width="1.8" height="3.0" fill="#ffffff" stroke="#605e5c" stroke-width="0.5" rx="0" />
<rect x="6.6" y="1" width="2.4" height="8.2" fill="#3a8fde" rx="0" />
<rect x="4" y="3.4" width="1.8" height="1.6" fill="#3a8fde" rx="0" />
</g>
<g transform="translate(606.3 161.7) scale(1.08) translate(-5 -5)">
<rect x="0.2" y="0.6" width="9.6" height="2.4" fill="#3a8fde" rx="0.4" />
<rect x="1.8" y="3.8" width="6.4" height="2.2" fill="#3a8fde" rx="0.4" />
<rect x="3.2" y="6.8" width="3.6" height="2.4" fill="#3a8fde" rx="0.4" />
</g>
<g transform="translate(621.9 161.7) scale(1.08) translate(-5 -5)">
<path d="M0.6 0v9.4h9.4" fill="none" stroke="#3b3a39" stroke-width="0.8" />
<circle cx="3" cy="6.6" r="0.6" fill="#3a8fde" />
<circle cx="4.6" cy="4.2" r="0.6" fill="#3a8fde" />
<circle cx="7.4" cy="5.6" r="0.6" fill="#3a8fde" />
<circle cx="5.8" cy="1.8" r="0.6" fill="#3a8fde" />
<circle cx="8.6" cy="2.4" r="0.6" fill="#3a8fde" />
<circle cx="2.6" cy="3.2" r="0.6" fill="#3a8fde" />
</g>
<g transform="translate(637.4 161.7) scale(1.08) translate(-5 -5)">
<circle cx="5" cy="5" r="4.5" fill="#ffffff" stroke="#3b3a39" stroke-width="0.8" />
<path d="M5 5v-4.5a4.5 4.5 0 0 1 3 7.8z" fill="#3a8fde" />
</g>
<g transform="translate(653.4 161.7) scale(1.08) translate(-5 -5)">
<circle cx="5" cy="5" r="3.4" fill="none" stroke="#3a8fde" stroke-width="2.1" />
<path d="M5 1.6a3.4 3.4 0 0 1 3.4 3.4" fill="none" stroke="#9ccaf2" stroke-width="2.1" />
<circle cx="5" cy="5" r="4.5" fill="none" stroke="#605e5c" stroke-width="0.4" />
</g>
<g transform="translate(574.6 177.1) scale(1.08) translate(-5 -5)">
<rect x="0.3" y="0.4" width="9.4" height="9.2" fill="#ffffff" stroke="#605e5c" stroke-width="0.6" rx="0" />
<rect x="0.3" y="0.4" width="4.3" height="9.2" fill="#3a8fde" rx="0" />
<line x1="0.3" y1="5.2" x2="4.6" y2="5.2" stroke="#ffffff" stroke-width="0.5" />
<rect x="5.2" y="4.8" width="2.2" height="4.8" fill="#3a8fde" rx="0" />
<line x1="4.9" y1="0.4" x2="4.9" y2="9.6" stroke="#ffffff" stroke-width="0.5" />
<line x1="4.9" y1="4.6" x2="9.7" y2="4.6" stroke="#605e5c" stroke-width="0.5" />
</g>
<g transform="translate(590.2 177.1) scale(1.08) translate(-5 -5)">
<circle cx="5" cy="4.6" r="4" fill="#3b3a39" />
<path d="M3 2.6l2.2-1l2.4 1.2l0.4 2.2l-1.8 2.2l-2.6-0.6l-1-2z" fill="#49a35c" />
<path d="M2.6 9.6h4.8M5 8.6v1" fill="none" stroke="#3b3a39" stroke-width="0.9" />
<circle cx="5" cy="4.6" r="4" fill="none" stroke="#605e5c" stroke-width="0.5" />
</g>
<g transform="translate(606.3 177.1) scale(1.08) translate(-5 -5)">
<path d="M0.4 1.2l3 1l2.2-1.4l4 1.2v4.6l-3 2.8l-3.2-1l-3 1.6z" fill="#3a8fde" />
<path d="M3.4 2.2v6.2M6.6 2.6v5.4M0.4 4.4h9.2" fill="none" stroke="#ffffff" stroke-width="0.5" />
</g>
<g transform="translate(621.9 177.1) scale(1.08) translate(-5 -5)">
<path d="M0.8 7.8a4.3 4.3 0 0 1 8.6 0" fill="none" stroke="#3b3a39" stroke-width="1.7" />
<path d="M0.8 7.8a4.3 4.3 0 0 1 2.4-3.8" fill="none" stroke="#3a8fde" stroke-width="1.7" />
<path d="M5 7.8l2-3" fill="none" stroke="#3b3a39" stroke-width="0.6" />
</g>
<g transform="translate(637.4 177.1) scale(1.08) translate(-5 -5)">
<rect x="1.2" y="2.4" width="8.6" height="6.6" fill="#ffffff" stroke="#605e5c" stroke-width="0.6" rx="0" />
<text x="2.4" y="7.33" font-size="3.8" fill="#3a8fde" font-weight="700" textLength="6.6" lengthAdjust="spacingAndGlyphs" >123</text>
<path d="M1.2 -0.4h2.8l-1.2 3h1.8l-3.8 4.4l1-3.4h-1.6z" fill="#e8883a" />
</g>
<g transform="translate(653.4 177.1) scale(1.08) translate(-5 -5)">
<rect x="0.2" y="1.8" width="9.6" height="6.4" fill="#ffffff" stroke="#605e5c" stroke-width="0.6" rx="0" />
<text x="1.6" y="6.57" font-size="3.9" fill="#3a8fde" font-weight="700" textLength="6.8" lengthAdjust="spacingAndGlyphs" >123</text>
</g>
<g transform="translate(574.6 192.9) scale(1.08) translate(-5 -5)">
<rect x="0.3" y="0.8" width="9.4" height="8.4" fill="#ffffff" stroke="#3b3a39" stroke-width="0.7" rx="0" />
<line x1="0.3" y1="0.8" x2="0.3" y2="9.2" stroke="#3b3a39" stroke-width="1" />
<line x1="2.4" y1="3.3" x2="8" y2="3.3" stroke="#3a8fde" stroke-width="1.1" />
<line x1="2.4" y1="5.4" x2="6.6" y2="5.4" stroke="#3a8fde" stroke-width="1.1" />
<line x1="2.4" y1="7.2" x2="7.4" y2="7.2" stroke="#605e5c" stroke-width="0.5" />
</g>
<g transform="translate(590.2 192.9) scale(1.08) translate(-5 -5)">
<rect x="0.3" y="1.2" width="9.4" height="7.6" fill="#ffffff" stroke="#605e5c" stroke-width="0.7" rx="0" />
<path d="M1.8 6.4l1.7-2.9l1.7 2.9z" fill="#49a35c" />
<path d="M5.2 3.5l1.7 2.9l1.7-2.9z" fill="#d13438" />
</g>
<g transform="translate(606.3 192.9) scale(1.08) translate(-5 -5)">
<rect x="0.3" y="1.2" width="9.4" height="7.6" fill="#ffffff" stroke="#605e5c" stroke-width="0.7" rx="0" />
<line x1="0.3" y1="3.2" x2="9.7" y2="3.2" stroke="#605e5c" stroke-width="0.6" />
<line x1="1.6" y1="5.2" x2="4" y2="5.2" stroke="#605e5c" stroke-width="0.6" />
<path d="M4.6 4.8h5.2l-2 2.4v2.6l-1.2-0.8v-1.8z" fill="#ffffff" stroke="#3b3a39" stroke-width="0.6" />
</g>
<g transform="translate(621.9 192.9) scale(1.08) translate(-5 -5)">
<rect x="0.3" y="0.8" width="9.4" height="8.4" fill="#ffffff" stroke="#605e5c" stroke-width="0.7" rx="0" />
<line x1="0.3" y1="3.4" x2="9.7" y2="3.4" stroke="#605e5c" stroke-width="0.5" />
<line x1="0.3" y1="6.3" x2="9.7" y2="6.3" stroke="#605e5c" stroke-width="0.5" />
<line x1="3.5" y1="0.8" x2="3.5" y2="9.2" stroke="#605e5c" stroke-width="0.5" />
<line x1="6.6" y1="0.8" x2="6.6" y2="9.2" stroke="#605e5c" stroke-width="0.5" />
</g>
<g transform="translate(637.4 192.9) scale(1.08) translate(-5 -5)">
<rect x="0.3" y="0.8" width="9.4" height="8.4" fill="#ffffff" stroke="#605e5c" stroke-width="0.7" rx="0" />
<rect x="0.3" y="0.8" width="9.4" height="2.6" fill="#3a8fde" rx="0" />
<rect x="0.3" y="0.8" width="3.2" height="8.4" fill="#3a8fde" rx="0" />
<rect x="3.5" y="3.4" width="6.2" height="5.8" fill="#9ccaf2" rx="0" />
<line x1="0.3" y1="3.4" x2="9.7" y2="3.4" stroke="#ffffff" stroke-width="0.5" />
<line x1="0.3" y1="6.3" x2="9.7" y2="6.3" stroke="#ffffff" stroke-width="0.5" />
<line x1="3.5" y1="0.8" x2="3.5" y2="9.2" stroke="#ffffff" stroke-width="0.5" />
<line x1="6.6" y1="0.8" x2="6.6" y2="9.2" stroke="#ffffff" stroke-width="0.5" />
</g>
<text x="650.2" y="196.5" font-size="9.6" fill="#2178c6" font-weight="700" textLength="6.0" lengthAdjust="spacingAndGlyphs" >R</text>
<text x="569.8" y="211.3" font-size="9.6" fill="#2178c6" font-weight="700" textLength="10.8" lengthAdjust="spacingAndGlyphs" >Py</text>
<g transform="translate(590.2 208.5) scale(1.08) translate(-5 -5)">
<path d="M0.6 0v9.6h9" fill="none" stroke="#3b3a39" stroke-width="0.8" />
<line x1="0.6" y1="2" x2="6.6" y2="2" stroke="#605e5c" stroke-width="0.6" />
<circle cx="7.6" cy="2" r="1" fill="#3a8fde" />
<line x1="0.6" y1="5" x2="4" y2="5" stroke="#605e5c" stroke-width="0.6" />
<circle cx="5" cy="5" r="1" fill="#3a8fde" />
<line x1="0.6" y1="7.8" x2="5.6" y2="7.8" stroke="#605e5c" stroke-width="0.6" />
</g>
<g transform="translate(606.3 208.5) scale(1.08) translate(-5 -5)">
<rect x="0" y="3.8" width="3.4" height="2.4" fill="#3a8fde" rx="0" />
<path d="M3.4 5h2.2M5.6 1.6v6.8M5.6 1.6h1.4M5.6 5h1.4M5.6 8.4h1.4" fill="none" stroke="#3a8fde" stroke-width="0.8" />
<rect x="7" y="0.4" width="2.8" height="2.4" fill="#3a8fde" rx="0.5" />
<rect x="7" y="3.8" width="2.8" height="2.4" fill="#3a8fde" rx="0.5" />
<rect x="7" y="7.2" width="2.8" height="2.4" fill="#3a8fde" rx="0.5" />
</g>
<g transform="translate(621.9 208.5) scale(1.08) translate(-5 -5)">
<path d="M0.4 0.8h9.4v6.2h-5.4l-2.2 2.6v-2.6h-1.8z" fill="#ffffff" stroke="#3a8fde" stroke-width="0.9" />
</g>
<g transform="translate(637.4 208.5) scale(1.08) translate(-5 -5)">
<path d="M1.4 0.4h5l2.6 2.6v6.6h-7.6z" fill="#ffffff" stroke="#3b3a39" stroke-width="0.7" />
<path d="M6.4 0.4v2.6h2.6" fill="none" stroke="#3b3a39" stroke-width="0.6" />
<line x1="2.8" y1="3.4" x2="4.6" y2="3.4" stroke="#3a8fde" stroke-width="0.9" />
<line x1="2.8" y1="5.2" x2="6.6" y2="5.2" stroke="#3a8fde" stroke-width="0.9" />
<line x1="2.8" y1="7.2" x2="5.6" y2="7.2" stroke="#9ccaf2" stroke-width="0.9" />
</g>
<g transform="translate(653.4 208.5) scale(1.08) translate(-5 -5)">
<path d="M2.6 0.6h4.8v3.2a2.4 2.4 0 0 1-4.8 0z" fill="#ffffff" stroke="#3b3a39" stroke-width="0.8" />
<path d="M5 6.2v1.6 M2.6 1.6h-1.9c0 2 0.7 2.9 2.1 3.1 M7.4 1.6h1.9c0 2-0.7 2.9-2.1 3.1" fill="none" stroke="#3b3a39" stroke-width="0.7" />
<rect x="3" y="7.8" width="4" height="1.6" fill="#3a8fde" rx="0" />
</g>
<g transform="translate(574.6 224) scale(1.08) translate(-5 -5)">
<path d="M1 0.4h5l2.6 2.6v6.6h-7.6z" fill="#ffffff" stroke="#3b3a39" stroke-width="0.8" />
<rect x="2.4" y="6" width="1.0" height="2.8" fill="#3b3a39" rx="0" />
<rect x="4" y="4.6" width="1" height="4.2" fill="#3b3a39" rx="0" />
<rect x="5.6" y="5.6" width="1.0" height="3.2" fill="#3b3a39" rx="0" />
<path d="M6 0.4v2.6h2.6" fill="none" stroke="#3b3a39" stroke-width="0.6" />
</g>
<g transform="translate(590.2 224) scale(1.08) translate(-5 -5)">
<rect x="1.6" y="2.2" width="8.0" height="6.0" fill="#ffffff" stroke="#605e5c" stroke-width="0.6" rx="0" />
<rect x="2.4" y="3.4" width="2.6" height="2.6" fill="#9ccaf2" rx="0" />
<path d="M5 6h5l-1.8 2.2v2l-1.4-0.8v-1.2z" fill="#ffffff" stroke="#3b3a39" stroke-width="0.6" />
<path d="M0.8 -0.4h2.8l-1.2 3h1.8l-3.8 4.4l1-3.4h-1.6z" fill="#e8883a" />
</g>
<g transform="translate(606.3 224) scale(1.08) translate(-5 -5)">
<rect x="1.6" y="2.2" width="8.0" height="6.0" fill="#ffffff" stroke="#605e5c" stroke-width="0.6" rx="0" />
<text x="3" y="6.26" font-size="3.6" fill="#3a8fde" font-weight="700" textLength="2.4" lengthAdjust="spacingAndGlyphs" >A</text>
<path d="M5 6h5l-1.8 2.2v2l-1.4-0.8v-1.2z" fill="#ffffff" stroke="#3b3a39" stroke-width="0.6" />
<path d="M0.8 -0.4h2.8l-1.2 3h1.8l-3.8 4.4l1-3.4h-1.6z" fill="#e8883a" />
</g>
<g transform="translate(621.9 224) scale(1.08) translate(-5 -5)">
<rect x="1.6" y="2.2" width="8.0" height="6.0" fill="#ffffff" stroke="#605e5c" stroke-width="0.6" rx="0" />
<line x1="2.6" y1="4.4" x2="5.4" y2="4.4" stroke="#605e5c" stroke-width="0.5" />
<line x1="2.6" y1="6" x2="4.6" y2="6" stroke="#605e5c" stroke-width="0.5" />
<path d="M5 6h5l-1.8 2.2v2l-1.4-0.8v-1.2z" fill="#ffffff" stroke="#3b3a39" stroke-width="0.6" />
<path d="M0.8 -0.4h2.8l-1.2 3h1.8l-3.8 4.4l1-3.4h-1.6z" fill="#e8883a" />
</g>
<g transform="translate(637.4 224) scale(1.08) translate(-5 -5)">
<rect x="0.3" y="1.6" width="9.4" height="7.2" fill="#e5f0fb" stroke="#605e5c" stroke-width="0.7" rx="0" />
<path d="M0.6 8.4l3-3.6l2.4 2.4l1.6-1.4l2 2.6z" fill="#3a8fde" />
<circle cx="7.2" cy="3.6" r="0.7" fill="#3a8fde" />
</g>
<g transform="translate(653.4 224) scale(1.08) translate(-5 -5)">
<rect x="1.4" y="1.4" width="8.2" height="8.0" fill="#ffffff" stroke="#3a8fde" stroke-width="1.2" rx="0" />
<path d="M3.4 7.6c2-0.4 1.6-3 3.8-3.6" fill="none" stroke="#3a8fde" stroke-width="0.9" />
<circle cx="8.6" cy="8.6" r="1.2" fill="#e8883a" />
<path d="M0.2 -0.2h2.6v3.8l-1.3-0.9l-1.3 0.9z" fill="#e8883a" />
</g>
<g transform="translate(574.6 239.6) scale(1.08) translate(-5 -5)">
<path d="M5 0.4l4.6 4.6l-4.6 4.6l-4.6-4.6z" fill="none" stroke="#a33fc4" stroke-width="0.9" />
<path d="M2.7 2.7l4.6 4.6M7.3 2.7l-4.6 4.6" fill="none" stroke="#a33fc4" stroke-width="0.8" />
<circle cx="5" cy="5" r="1.2" fill="#f3f2f1" />
</g>
<g transform="translate(590.2 239.6) scale(1.08) translate(-5 -5)">
<path d="M0.4 0.8h4l5 4.2l-5 4.2h-4l5-4.2z" fill="#ffffff" stroke="#3a8fde" stroke-width="0.9" />
<path d="M3.4 3l2.4 2l-2.4 2" fill="none" stroke="#3a8fde" stroke-width="0.8" />
</g>
<circle cx="602.6" cy="239.8" r="0.6" fill="#605e5c" />
<circle cx="606.2" cy="239.8" r="0.6" fill="#605e5c" />
<circle cx="609.8" cy="239.8" r="0.6" fill="#605e5c" />
<text x="570.5" y="263.06" font-size="7.3" fill="#252423" font-weight="400" textLength="21.3" lengthAdjust="spacingAndGlyphs" >Valeurs</text>
<rect x="567.2" y="268.6" width="93.8" height="14.4" fill="#ffffff" stroke="#c8c6c4" stroke-width="0.7" rx="0.5" stroke-dasharray="0.9 0.9"/>
<text x="572" y="278.52" font-size="7.5" fill="#252423" font-weight="400" textLength="87" lengthAdjust="spacingAndGlyphs" >Ajouter des champs de don...</text>
<text x="570.5" y="296.66" font-size="7.3" fill="#252423" font-weight="400" textLength="23.5" lengthAdjust="spacingAndGlyphs" >Extraire</text>
<text x="570.5" y="310.66" font-size="7.3" fill="#252423" font-weight="400" textLength="35.7" lengthAdjust="spacingAndGlyphs" >Interrapport</text>
<text x="570.5" y="326.06" font-size="7.3" fill="#252423" font-weight="400" textLength="62.5" lengthAdjust="spacingAndGlyphs" >Garder tous les filtres</text>
<rect x="634" y="304" width="18.6" height="8.2" fill="#117865" rx="4.1" />
<circle cx="648.2" cy="308.1" r="2.5" fill="#ffffff" />
<path d="M637.4 308.2l1.8 1.8l3-3.3" fill="none" stroke="#ffffff" stroke-width="1.2" />
<rect x="634" y="319" width="18.6" height="8.2" fill="#117865" rx="4.1" />
<circle cx="648.2" cy="323.1" r="2.5" fill="#ffffff" />
<path d="M637.4 323.2l1.8 1.8l3-3.3" fill="none" stroke="#ffffff" stroke-width="1.2" />
<rect x="567.2" y="333" width="93.8" height="14.8" fill="#ffffff" stroke="#c8c6c4" stroke-width="0.7" rx="0.5" stroke-dasharray="0.9 0.9"/>
<text x="571.3" y="343.52" font-size="7.5" fill="#252423" font-weight="400" textLength="81.7" lengthAdjust="spacingAndGlyphs" >Ajouter des champs d'extr...</text>
<text x="670" y="76.43" font-size="10.4" fill="#252423" font-weight="400" textLength="35.6" lengthAdjust="spacingAndGlyphs" stroke="#252423" stroke-width="0.45">Données</text>
<path d="M754 70l2.8 3l-2.8 3M757.3 70l2.8 3l-2.8 3" fill="none" stroke="#323130" stroke-width="0.8" />
<rect x="668" y="87.6" width="97" height="12.4" fill="#ffffff" stroke="#c8c6c4" stroke-width="0.8" rx="2" />
<circle cx="677.5" cy="93" r="2.9" fill="none" stroke="#605e5c" stroke-width="0.8" />
<line x1="679.6" y1="95.2" x2="682.2" y2="97.8" stroke="#605e5c" stroke-width="0.9" />
<text x="686.5" y="96.7" font-size="8" fill="#8a8886" font-weight="400" textLength="39.0" lengthAdjust="spacingAndGlyphs" >Rechercher</text>
<path d="M674.2 109.6l2.6 2.9l-2.6 2.9" fill="none" stroke="#605e5c" stroke-width="0.7" />
<rect x="681.4" y="109" width="6.6" height="6.8" fill="none" stroke="#323130" stroke-width="0.9" rx="1.4" />
<line x1="681.4" y1="111.4" x2="688" y2="111.4" stroke="#323130" stroke-width="0.7" />
<line x1="681.4" y1="113.6" x2="688" y2="113.6" stroke="#323130" stroke-width="0.7" />
<line x1="683.6" y1="109" x2="683.6" y2="115.8" stroke="#323130" stroke-width="0.7" />
<line x1="685.8" y1="109" x2="685.8" y2="115.8" stroke="#323130" stroke-width="0.7" />
<text x="691.5" y="115.02" font-size="7.2" fill="#252423" font-weight="400" textLength="60.3" lengthAdjust="spacingAndGlyphs" >Retail Sales Data Set</text>
<rect x="30" y="378.8" width="10.6" height="6.6" fill="none" stroke="#323130" stroke-width="0.9" rx="0.6" />
<line x1="35.3" y1="385.4" x2="35.3" y2="387.4" stroke="#323130" stroke-width="0.8" />
<line x1="32.4" y1="387.6" x2="38.2" y2="387.6" stroke="#323130" stroke-width="0.9" />
<rect x="29" y="390" width="13" height="1.4" fill="#117865" rx="0" />
<rect x="56.6" y="378.4" width="6.0" height="10.6" fill="none" stroke="#605e5c" stroke-width="0.9" rx="1" />
<circle cx="59.6" cy="387.3" r="0.45" fill="#605e5c" />
<path d="M77.6 383.2l-1.7 1.9l1.7 1.9" fill="none" stroke="#b3b0ad" stroke-width="0.8" />
<path d="M88 383.2l1.7 1.9l-1.7 1.9" fill="none" stroke="#b3b0ad" stroke-width="0.8" />
<rect x="94.5" y="375" width="42.5" height="19" fill="#ffffff" rx="0" />
<rect x="94.5" y="392" width="42.5" height="2" fill="#117865" rx="0" />
<text x="106" y="387.69" font-size="7.4" fill="#252423" font-weight="700" textLength="19.4" lengthAdjust="spacingAndGlyphs" >Page 1</text>
<rect x="137" y="375" width="22" height="19" fill="#117865" rx="0" />
<path d="M145.2 384.3h6.2M148.3 381.2v6.2" fill="none" stroke="#ffffff" stroke-width="1.5" />
<text x="2.6" y="404.72" font-size="7.2" fill="#323130" font-weight="400" textLength="35.8" lengthAdjust="spacingAndGlyphs" >Page 1 sur 1</text>
<line x1="646.8" y1="401.6" x2="648.8" y2="401.6" stroke="#323130" stroke-width="0.8" />
<line x1="652.5" y1="401.6" x2="708" y2="401.6" stroke="#605e5c" stroke-width="0.6" />
<rect x="667.2" y="398" width="1.6" height="7" fill="#323130" rx="0" />
<line x1="680.8" y1="400.2" x2="680.8" y2="403" stroke="#605e5c" stroke-width="0.6" />
<path d="M711.6 401.6h3.4M713.3 399.9v3.4" fill="none" stroke="#323130" stroke-width="0.7" />
<text x="724" y="404.42" font-size="7.2" fill="#605e5c" font-weight="400" textLength="14" lengthAdjust="spacingAndGlyphs" >59 %</text>
<rect x="747.3" y="398.3" width="8.7" height="6.7" fill="none" stroke="#484644" stroke-width="1" rx="1" />
<rect x="749" y="399.8" width="5.3" height="3.7" fill="none" stroke="#484644" stroke-width="0.6" rx="0" />
<rect x="0" y="408" width="760" height="13" fill="#1f1f1f" rx="0" />
<path d="M9.5 415.2h3.9v3.9h-3.9zM14.1 415.2h3.9v3.9h-3.9zM9.5 419.8h3.9v3.9h-3.9zM14.1 419.8h3.9v3.9h-3.9z" fill="#ffffff" />
<rect x="27.3" y="410.2" width="160.7" height="14.8" fill="#ffffff" rx="0" />
<circle cx="40.4" cy="419.6" r="2.5" fill="none" stroke="#323130" stroke-width="0.9" />
<text x="49" y="422.8" font-size="8.6" fill="#484644" font-weight="400" textLength="91" lengthAdjust="spacingAndGlyphs" >Taper ici pour rechercher</text>
<defs><linearGradient id="sky" x1="0" y1="0" x2="1" y2="0"><stop offset="0" stop-color="#1a2457"/><stop offset="0.45" stop-color="#2d3478"/><stop offset="0.72" stop-color="#5d4f8f"/><stop offset="0.86" stop-color="#9a7390"/><stop offset="1" stop-color="#262f6b"/></linearGradient></defs>
<path d="M146 425c0-7 2-11 6-13c3-1.6 8-1.8 14-1.8c8 0 13 0 16 2c4 2.4 4.6 6 4.6 12.8z" fill="url(#sky)" />
<circle cx="152" cy="416" r="0.35" fill="#e8e6f5" />
<circle cx="157" cy="413.5" r="0.35" fill="#e8e6f5" />
<circle cx="161" cy="418" r="0.35" fill="#e8e6f5" />
<circle cx="166" cy="412.6" r="0.35" fill="#e8e6f5" />
<circle cx="170" cy="416.4" r="0.35" fill="#e8e6f5" />
<circle cx="174" cy="413.4" r="0.35" fill="#e8e6f5" />
<circle cx="178" cy="418.6" r="0.35" fill="#e8e6f5" />
<circle cx="181" cy="414.8" r="0.35" fill="#e8e6f5" />
<circle cx="155" cy="420" r="0.35" fill="#e8e6f5" />
<circle cx="164" cy="415.5" r="0.35" fill="#e8e6f5" />
<rect x="197.4" y="415.6" width="7.0" height="7.4" fill="none" stroke="#ffffff" stroke-width="0.9" rx="0" />
<line x1="206" y1="415.2" x2="206" y2="421" stroke="#ffffff" stroke-width="0.9" />
<line x1="197" y1="418.4" x2="199" y2="418.4" stroke="#ffffff" stroke-width="0.8" />
<circle cx="230.4" cy="418.8" r="6" fill="#dd4b3e" />
<path d="M225.20000000000002 421.8a6 6 0 0 1 0-6l2.9 1.6l2.3 4z" fill="#2f9e4f" />
<path d="M236.3 417.8a6 6 0 0 1-5.9 7l2.6-4.6l0.6-2.4z" fill="#f7c52d" />
<path d="M225.20000000000002 415.8a6 6 0 0 1 11.1 2h-5.9l-3 1z" fill="#dd4b3e" />
<circle cx="230.4" cy="418.8" r="2.9" fill="#ffffff" />
<circle cx="230.4" cy="418.8" r="2.2" fill="#4a8af4" />
<circle cx="313.2" cy="418.8" r="6" fill="#dd4b3e" />
<path d="M308.0 421.8a6 6 0 0 1 0-6l2.9 1.6l2.3 4z" fill="#2f9e4f" />
<path d="M319.09999999999997 417.8a6 6 0 0 1-5.9 7l2.6-4.6l0.6-2.4z" fill="#f7c52d" />
<path d="M308.0 415.8a6 6 0 0 1 11.1 2h-5.9l-3 1z" fill="#dd4b3e" />
<circle cx="313.2" cy="418.8" r="2.9" fill="#ffffff" />
<circle cx="313.2" cy="418.8" r="2.2" fill="#4a8af4" />
<circle cx="340.8" cy="418.8" r="6" fill="#dd4b3e" />
<path d="M335.6 421.8a6 6 0 0 1 0-6l2.9 1.6l2.3 4z" fill="#2f9e4f" />
<path d="M346.7 417.8a6 6 0 0 1-5.9 7l2.6-4.6l0.6-2.4z" fill="#f7c52d" />
<path d="M335.6 415.8a6 6 0 0 1 11.1 2h-5.9l-3 1z" fill="#dd4b3e" />
<circle cx="340.8" cy="418.8" r="2.9" fill="#ffffff" />
<circle cx="340.8" cy="418.8" r="2.2" fill="#4a8af4" />
<path d="M250.6 416.6l7.2-4l7.8 3.4l-7 4.4z" fill="#3d8df0" />
<path d="M250.6 416.6l8 3.8v4l-8-4z" fill="#1b56b0" />
<path d="M258.6 420.4l7-4.4v4l-7 4.4z" fill="#62aaf7" />
<rect x="279.3" y="415.4" width="12.5" height="9.6" fill="#f3c443" rx="0" />
<rect x="279.3" y="414.2" width="5.3" height="1.8" fill="#e0a82e" rx="0" />
<rect x="280.6" y="418.8" width="10.0" height="6.2" fill="#7ab7e8" rx="0" />
<rect x="363.4" y="414" width="10.6" height="11" fill="#3a96e8" rx="1" />
<rect x="360.3" y="417.2" width="7.7" height="7.8" fill="#1f6fd0" rx="1" />
<rect x="382" y="408" width="27.7" height="13" fill="#3d3d3d" rx="0" />
<rect x="397.6" y="412.4" width="3.4" height="12.6" fill="#f2c811" rx="0" />
<rect x="394" y="415.8" width="3.4" height="9.2" fill="#e8b50e" rx="0" />
<rect x="390.6" y="419" width="3.2" height="6" fill="#d9a30b" rx="0" />
<circle cx="560" cy="420" r="5.6" fill="#f59b1e" />
<path d="M556 424a4.4 4.4 0 0 1 6-5a3.4 3.4 0 0 1 5 3.2v2z" fill="#8fc3ef" />
<text x="571" y="421.6" font-size="7.6" fill="#ffffff" font-weight="400" textLength="69" lengthAdjust="spacingAndGlyphs" >22°C  Très ensoleillé</text>
<path d="M653 420.6l3-3l3 3" fill="none" stroke="#ffffff" stroke-width="0.9" />
<path d="M666.4 419v3h1.8l2.2 2v-7l-2.2 2z" fill="none" stroke="#ffffff" stroke-width="0.7" />
<path d="M671.8 417.6a4 4 0 0 1 0 6" fill="none" stroke="#ffffff" stroke-width="0.7" />
<text x="680.5" y="421.3" font-size="6.6" fill="#ffffff" font-weight="400" textLength="12.7" lengthAdjust="spacingAndGlyphs" >ENG</text>
<text x="709.3" y="416.95" font-size="7.3" fill="#ffffff" font-weight="400" textLength="15.1" lengthAdjust="spacingAndGlyphs" >11:48</text>
<path d="M744.6 416.6h8v7h-8z" fill="none" stroke="#ffffff" stroke-width="0.9" />
<line x1="746" y1="419" x2="751" y2="419" stroke="#ffffff" stroke-width="0.7" />
<line x1="746" y1="421" x2="751" y2="421" stroke="#ffffff" stroke-width="0.7" />
</svg>
</body></html>
